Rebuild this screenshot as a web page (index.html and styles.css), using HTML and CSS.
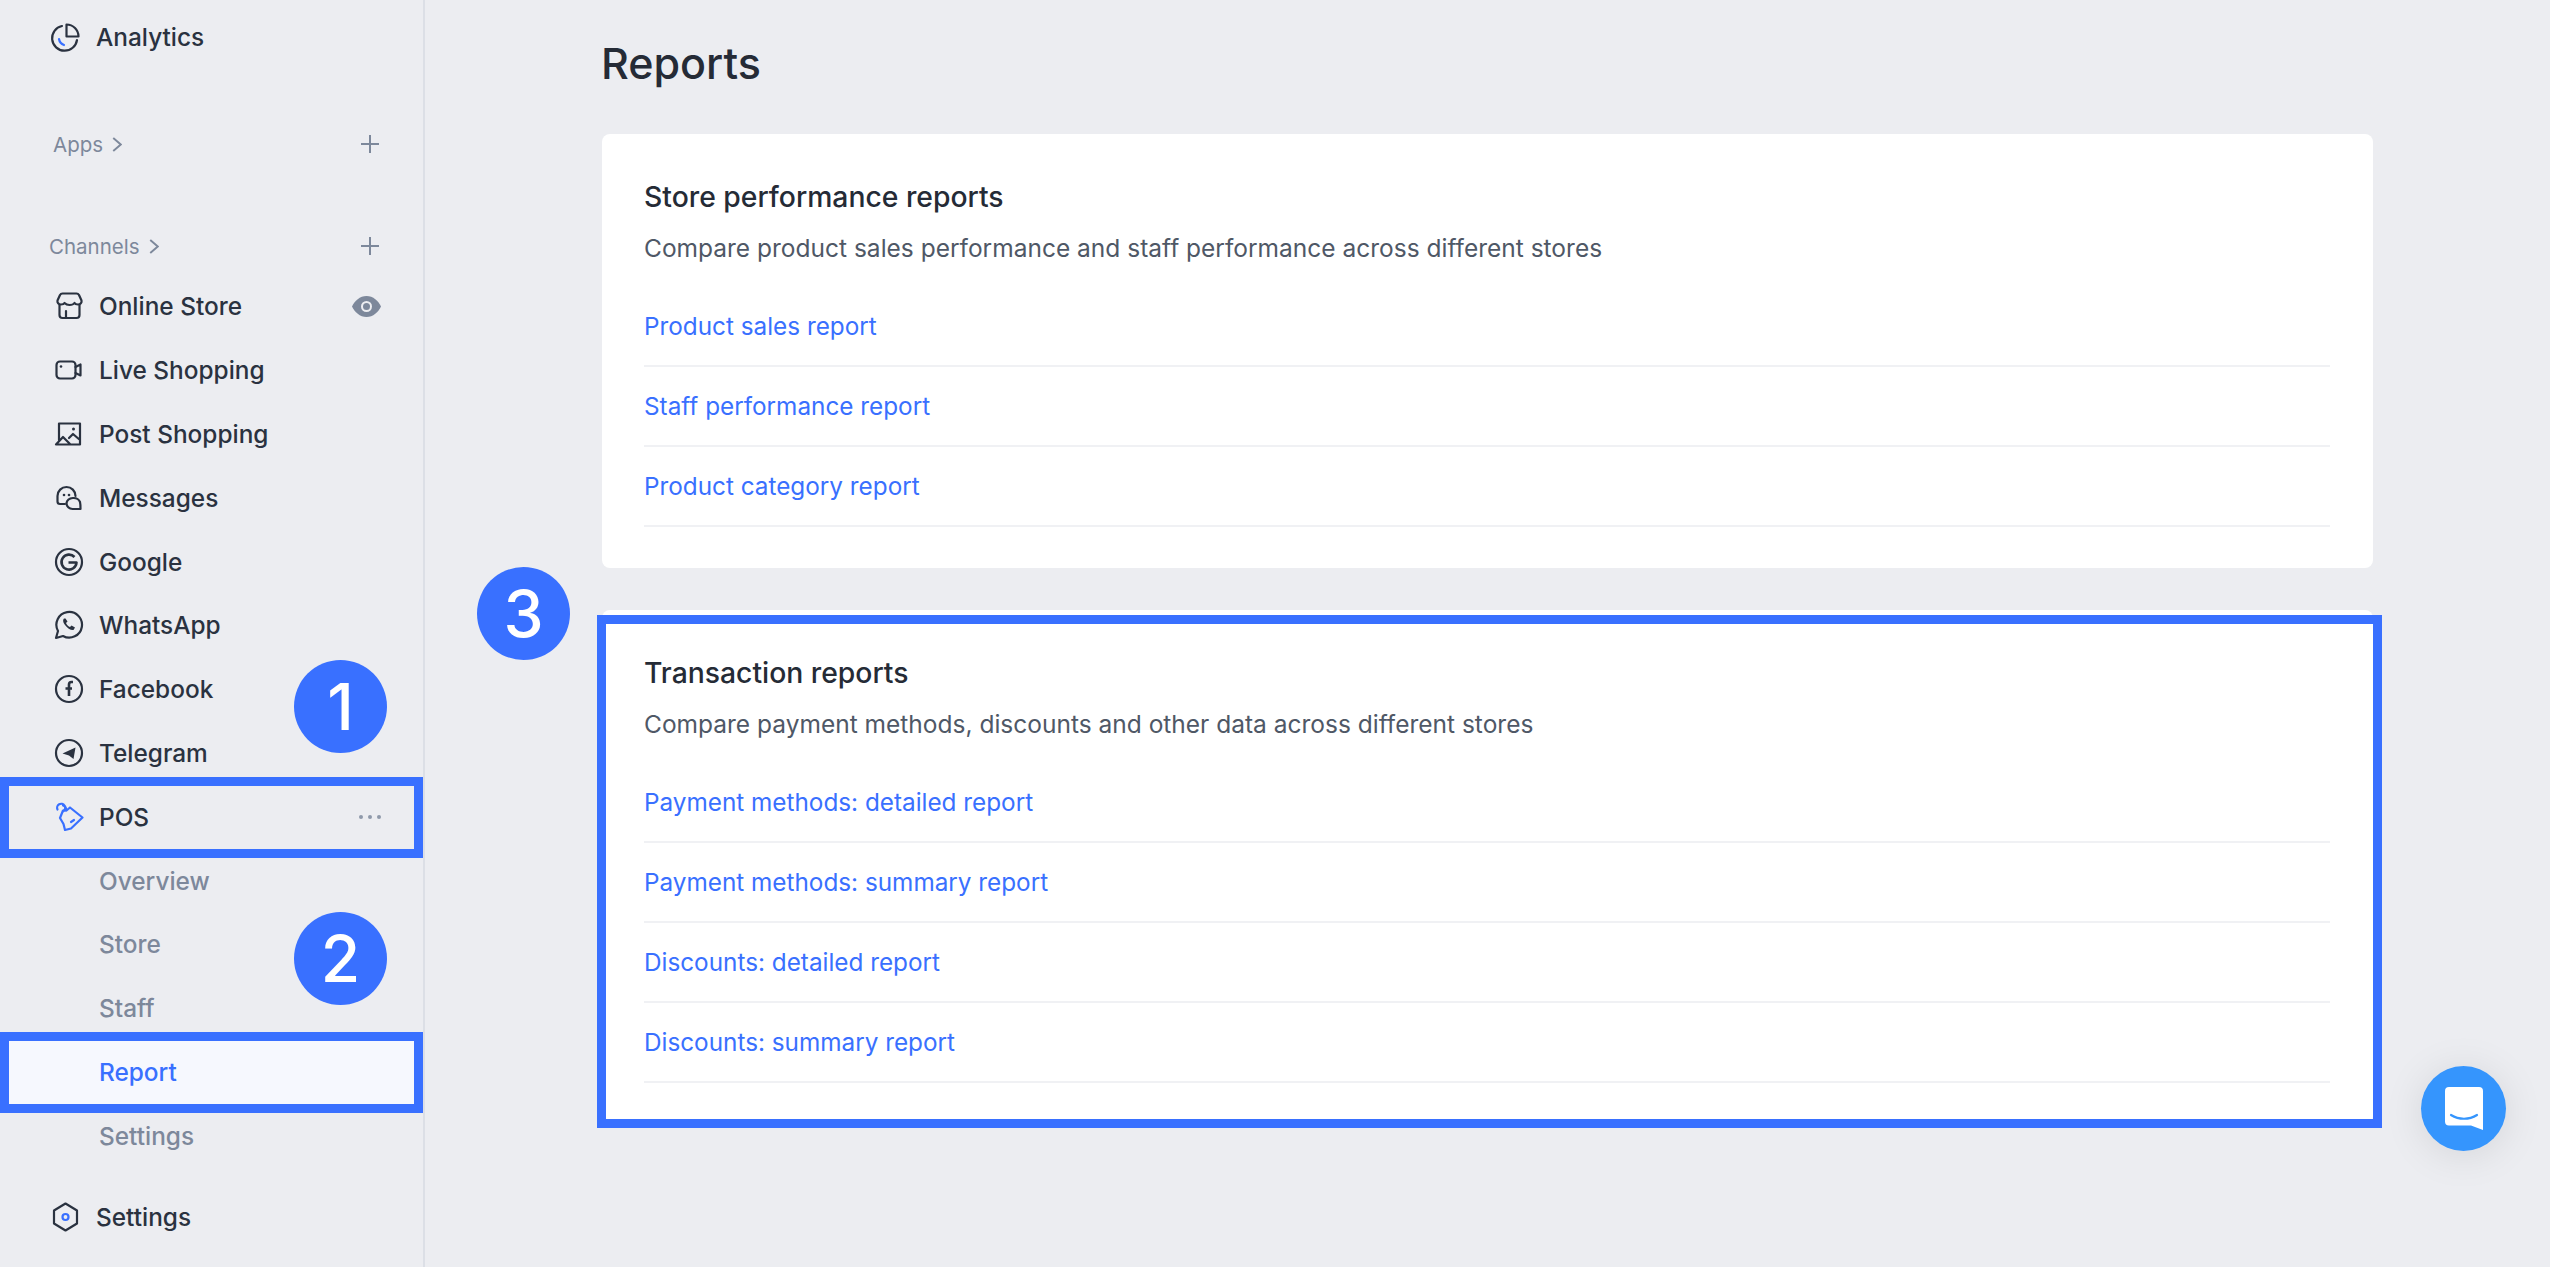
FILE: index.html
```html
<!DOCTYPE html>
<html lang="en">
<head>
  <meta charset="UTF-8">
  <title>Reports</title>
  <link rel="stylesheet" href="styles.css">
</head>
<body>
  <div class="app">
    <aside class="sidebar">
      <a class="item top">
        <svg class="ico" viewBox="0 0 30 30"><path d="M12 4A12.500 12.500 0 1 0 27 18"/><path d="M16.500 2.500a12 12 0 0 1 12 12h-12z"/><path class="blue" d="M9 17c.5 3 2 5 5 6"/></svg>
        Analytics
      </a>
      <div class="group apps">
        <span>Apps<svg class="chev" viewBox="0 0 10 16"><path d="M1 1l8 7-8 7"/></svg></span>
        <b class="plus"></b>
      </div>
      <div class="group channels">
        <span>Channels<svg class="chev" viewBox="0 0 10 16"><path d="M1 1l8 7-8 7"/></svg></span>
        <b class="plus"></b>
      </div>
      <a class="item">
        <svg class="ico" viewBox="0 0 30 30"><path d="M8.500 2.500h14a3 3 0 0 1 2.500 1.500l2.500 5.500c.5 2-1 4-3.500 4-2 0-3-.5-3.500-1.500-1 1.500-3 2-5 2-1.500 0-3.500-.5-5-2-.5 1-1.500 1.500-3.500 1.500-2.500 0-4-2-3.500-4L6 4a3 3 0 0 1 2.500-1.500z"/><path d="M5.500 14v10a3 3 0 0 0 3 3h14a3 3 0 0 0 3-3V14M12 27v-7"/></svg>
        Online Store
        <svg class="eye" viewBox="0 0 29 21"><path d="M14.500 0C21 0 26.500 5 29 10.500 26.500 16 21 21 14.500 21S2.500 16 0 10.500C2.500 5 8 0 14.500 0z"/><circle cx="14.500" cy="10.500" r="5.500" fill="#ecedf1"/><circle cx="14.500" cy="10.500" r="3.500"/></svg>
      </a>
      <a class="item">
        <svg class="ico" viewBox="0 0 30 30"><rect x="2.500" y="6.500" width="19" height="17" rx="3.500"/><path d="M21.500 12l5-2.500v11l-5-2.500"/><circle class="dot" cx="7" cy="11.500" r="1.300"/></svg>
        Live Shopping
      </a>
      <a class="item">
        <svg class="ico" viewBox="0 0 30 30"><path d="M5 21V4.500h21v21H2l7-7.500 7 7M15 19l4-4 7 6"/><circle class="dot" cx="19.500" cy="10" r="1.500"/></svg>
        Post Shopping
      </a>
      <a class="item">
        <svg class="ico" viewBox="0 0 30 30"><path d="M21.500 13a9 9 0 0 0-18 0v5.500c0 1.500 1 2.500 2.500 2.500h5"/><path d="M12.500 20a7 6 0 0 1 13.500-1c.5 2 .5 4 .5 7h-8a6 6 0 0 1-6-6z"/><circle class="dot" cx="10" cy="12" r="1.300"/><circle class="dot" cx="15" cy="12" r="1.300"/></svg>
        Messages
      </a>
      <a class="item">
        <svg class="ico" viewBox="0 0 30 30"><circle cx="15" cy="15" r="13"/><path class="thick" d="M20.500 10a7.500 7.500 0 1 0 2 5.500H14.500"/></svg>
        Google
      </a>
      <a class="item">
        <svg class="ico" viewBox="0 0 30 30"><path d="M2 28l2-7A12.800 12.800 0 1 1 9 26z"/><path class="dot" d="M10 8.500c-1 1-1.500 3 1 6.500s6 5.500 8.500 5l1.500-2.500-3.500-2-1.500 1.500c-1.500-.5-3.500-2.500-4-4l1.500-1.500-2-3z"/></svg>
        WhatsApp
      </a>
      <a class="item">
        <svg class="ico" viewBox="0 0 30 30"><circle cx="15" cy="15" r="13"/><path class="thick" d="M19 8h-1.500a2.500 2.500 0 0 0-2.500 2.500V22M11.500 14.500H18"/></svg>
        Facebook
      </a>
      <a class="item">
        <svg class="ico" viewBox="0 0 30 30"><circle cx="15" cy="15" r="13"/><path class="dot" d="M8.500 15.500L21.500 9.500l-2 11.500-4.500-3.500z"/></svg>
        Telegram
      </a>
      <a class="item framed">
        <svg class="ico tag" viewBox="0 0 30 30"><path d="M9 8.500h3.500L16 5.500l12.500 10L17 26.500l-6 1.500-1.500-6-3.500-6z"/><path d="M9.500 9A4 4 0 1 0 3.500 7.500"/><path d="M9 3.500a4 4 0 0 1 3 5"/><path d="M17 20l3-2"/></svg>
        POS
        <svg class="dots" viewBox="0 0 22 4"><circle cx="2" cy="2" r="2"/><circle cx="11" cy="2" r="2"/><circle cx="20" cy="2" r="2"/></svg>
      </a>
      <a class="sub">Overview</a>
      <a class="sub">Store</a>
      <a class="sub">Staff</a>
      <a class="sub active framed">Report</a>
      <a class="sub">Settings</a>
      <a class="item bottom">
        <svg class="ico" viewBox="0 0 30 30"><path d="M15.500 1.500L27 8.500v13l-11.500 7-11.500-7v-13z"/><circle class="blue" cx="15.500" cy="15" r="3"/></svg>
        Settings
      </a>

      <span class="badge badge-1">1</span>
      <span class="badge badge-2">2</span>
    </aside>

    <main class="content">
      <h1>Reports</h1>
      <section class="card">
        <h2>Store performance reports</h2>
        <p>Compare product sales performance and staff performance across different stores</p>
        <ul>
          <li><a>Product sales report</a></li>
          <li><a>Staff performance report</a></li>
          <li><a>Product category report</a></li>
        </ul>
      </section>
      <section class="card outlined">
        <span class="badge badge-3">3</span>
        <h2>Transaction reports</h2>
        <p>Compare payment methods, discounts and other data across different stores</p>
        <ul>
          <li><a>Payment methods: detailed report</a></li>
          <li><a>Payment methods: summary report</a></li>
          <li><a>Discounts: detailed report</a></li>
          <li><a>Discounts: summary report</a></li>
        </ul>
      </section>
    </main>
  </div>

  <div class="chat">
    <svg viewBox="0 0 38 43"><path d="M4 0h30a4 4 0 0 1 4 4v39l-12-4.500H4a4 4 0 0 1-4-4V4a4 4 0 0 1 4-4z"/><path class="smile" d="M6 28c8 5 18 5 26 0"/></svg>
  </div>
</body>
</html>
```

FILE: styles.css
```css
* {
  box-sizing: border-box;
}
html, body {
  margin: 0;
  height: 100%;
  overflow: hidden;
}
body {
  background: #ecedf1;
  font-family: Inter, "Liberation Sans", sans-serif;
  color: #2a3240;
}
.app {
  display: flex;
  height: 100vh;
}
.sidebar {
  position: relative;
  flex: 0 0 425px;
  border-right: 2px solid #dcdfe6;
  padding-top: 17px;
}
.item {
  position: relative;
  display: flex;
  align-items: center;
  height: 63.8px;
  padding-left: 54px;
  font-size: 24.4px;
  font-weight: 500;
}
.ico {
  width: 30px;
  height: 30px;
  margin-right: 15px;
  flex: none;
  fill: none;
  stroke: #2a3240;
  stroke-width: 2.2;
  stroke-linejoin: round;
  stroke-linecap: round;
}
.ico .blue {
  stroke: #3970ff;
}
.ico .dot {
  fill: #2a3240;
  stroke: none;
}
.ico .thick {
  stroke-width: 2.6;
  stroke-linecap: butt;
}
.ico.tag {
  stroke: #3970ff;
}
.item.top {
  height: 40px;
  padding-left: 50px;
}
.item.top .ico,
.item.bottom .ico {
  margin-right: 16px;
}
.group {
  display: flex;
  justify-content: space-between;
  align-items: center;
  height: 40px;
  padding: 0 44px 0 53px;
  font-size: 20.5px;
  color: #7d889b;
}
.group span {
  display: flex;
  align-items: center;
}
.group.apps {
  margin-top: 67px;
}
.group.channels {
  padding-left: 49px;
  margin-top: 62px;
  margin-bottom: 8.5px;
}
.chev {
  width: 10px;
  height: 15px;
  margin-left: 9px;
  fill: none;
  stroke: #7d889b;
  stroke-width: 2;
}
.plus {
  width: 18px;
  height: 18px;
  background:
    linear-gradient(#7d889b, #7d889b) center / 100% 2px no-repeat,
    linear-gradient(#7d889b, #7d889b) center / 2px 100% no-repeat;
}
.eye {
  width: 29px;
  height: 21px;
  margin-left: auto;
  margin-right: 42px;
  fill: #7d889b;
}
.dots {
  width: 22px;
  height: 4px;
  margin-left: auto;
  margin-right: 42px;
  fill: #8f99aa;
}
.sub {
  position: relative;
  display: flex;
  align-items: center;
  height: 63.8px;
  padding-left: 99px;
  font-size: 24.4px;
  font-weight: 500;
  color: #7d889b;
}
.sub.active {
  color: #3970ff;
  background: #f6f8fe;
}
.item.bottom {
  margin-top: 17px;
  padding-left: 50px;
}
.framed::after {
  content: "";
  position: absolute;
  inset: -8px 0 -9px 0;
  border: 9px solid #3970ff;
}
.badge {
  position: absolute;
  width: 93px;
  height: 93px;
  border-radius: 50%;
  background: #3970ff;
  color: #fff;
  font-size: 64px;
  font-weight: 500;
  line-height: 93px;
  text-align: center;
}
.badge-1 {
  left: 294px;
  top: 660px;
}
.badge-2 {
  left: 294px;
  top: 912px;
}
.badge-3 {
  left: -125px;
  top: -43px;
}
.content {
  flex: 1;
  padding-left: 177px;
}
h1 {
  margin: 0 0 0 -1px;
  padding-top: 36px;
  height: 134px;
  font-size: 43px;
  font-weight: 500;
  line-height: 54px;
  color: #252b36;
}
.card {
  position: relative;
  width: 1771px;
  background: #fff;
  border-radius: 8px;
  padding: 45px 43px 41px 42px;
  margin-bottom: 42px;
}
.outlined::after {
  content: "";
  position: absolute;
  inset: 5px -9px -4px -5px;
  border: 9px solid #3970ff;
  pointer-events: none;
}
h2 {
  margin: 0;
  font-size: 28.3px;
  font-weight: 500;
  line-height: 36px;
  color: #252b36;
}
.card p {
  margin: 15px 0 0;
  font-size: 24.5px;
  line-height: 36px;
  color: #4f5866;
}
ul {
  list-style: none;
  margin: 21px 0 0;
  padding: 0;
}
li {
  height: 80px;
  display: flex;
  align-items: center;
  border-bottom: 2px solid #f0f1f4;
}
li a {
  font-size: 24.3px;
  color: #3970ff;
}
.chat {
  position: fixed;
  right: 44px;
  bottom: 116px;
  width: 85px;
  height: 85px;
  border-radius: 50%;
  background: #3595fd;
  box-shadow: 0 4px 40px rgba(0, 0, 0, 0.1);
  display: flex;
  align-items: center;
  justify-content: center;
}
.chat svg {
  width: 38px;
  height: 43px;
  fill: #fff;
}
.chat .smile {
  fill: none;
  stroke: #3595fd;
  stroke-width: 2.2;
  stroke-linecap: round;
}
```
